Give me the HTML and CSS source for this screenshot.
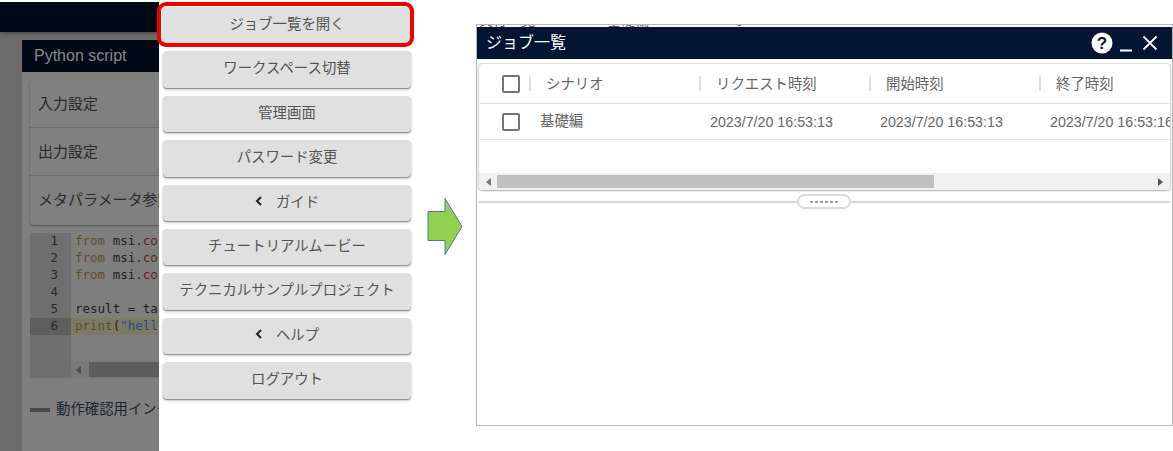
FILE: index.html
```html
<!DOCTYPE html>
<html lang="ja">
<head>
<meta charset="utf-8">
<title>ジョブ一覧</title>
<link rel="stylesheet" href="styles.css">
</head>
<body>
<main class="canvas">
  <section class="app-shot">
    <div class="app-topbar"></div>
    <div class="app-panel">
      <h2 class="panel-title">Python script</h2>
      <div class="accordion">
        <div class="acc-row">入力設定</div>
        <div class="acc-row">出力設定</div>
        <div class="acc-row">メタパラメータ参照設定</div>
      </div>
      <div class="editor">
        <div class="code-line"><span class="ln">1</span><span class="code"><span class="kw">from</span> msi.<span class="mod">core</span></span></div>
        <div class="code-line"><span class="ln">2</span><span class="code"><span class="kw">from</span> msi.<span class="mod">core</span></span></div>
        <div class="code-line"><span class="ln">3</span><span class="code"><span class="kw">from</span> msi.<span class="mod">core</span></span></div>
        <div class="code-line"><span class="ln">4</span><span class="code"></span></div>
        <div class="code-line"><span class="ln">5</span><span class="code">result = task</span></div>
        <div class="code-line active"><span class="ln">6</span><span class="code"><span class="kw">print</span>(<span class="str">"hello"</span>)</span></div>
        <div class="code-fill"><span class="ln"></span><span class="code"></span></div>
        <div class="code-scroll">
          <span class="ln"></span>
          <div class="code-track">
            <svg class="tri" width="6" height="8" viewBox="0 0 6 8"><path d="M5 0v8L0 4z" fill="#4a4a4a"/></svg>
            <div class="code-thumb"></div>
          </div>
        </div>
      </div>
      <div class="legend"><span class="legend-dash"></span><span class="legend-text">動作確認用インターフェース</span></div>
    </div>
  </section>

  <nav class="drawer">
    <button class="menu-btn">ジョブ一覧を開く</button>
    <button class="menu-btn">ワークスペース切替</button>
    <button class="menu-btn">管理画面</button>
    <button class="menu-btn">パスワード変更</button>
    <button class="menu-btn"><svg class="chev" width="8" height="10" viewBox="0 0 8 10"><path d="M6 1 2 5l4 4" fill="none" stroke="#222" stroke-width="2"/></svg>ガイド</button>
    <button class="menu-btn">チュートリアルムービー</button>
    <button class="menu-btn">テクニカルサンプルプロジェクト</button>
    <button class="menu-btn"><svg class="chev" width="8" height="10" viewBox="0 0 8 10"><path d="M6 1 2 5l4 4" fill="none" stroke="#222" stroke-width="2"/></svg>ヘルプ</button>
    <button class="menu-btn">ログアウト</button>
  </nav>
  <div class="highlight"></div>

  <svg class="arrow" width="36" height="60" viewBox="0 0 36 60"><path d="M1 14.500h17V1.500l17 28-17 28V43.500H1z" fill="#92d050" stroke="#4a78a8" stroke-width="1"/></svg>

  <section class="job-window">
    <div class="clip-strip"><span class="clip-a">実行一覧</span><span class="clip-b">基礎編</span><span class="clip-c">の</span></div>
    <header class="win-head">
      <h1 class="win-title">ジョブ一覧</h1>
      <div class="win-icons">
        <svg width="22" height="22" viewBox="0 0 22 22"><circle cx="11" cy="11" r="10.500" fill="#fff"/><text x="11" y="17" text-anchor="middle" class="help-mark">?</text></svg>
        <svg width="14" height="22" viewBox="0 0 14 22"><path d="M1 18.500h12" stroke="#fff" stroke-width="2"/></svg>
        <svg class="win-close" width="16" height="22" viewBox="0 0 16 22"><path d="M1.500 4.500l13 13M14.500 4.500l-13 13" stroke="#fff" stroke-width="1.800"/></svg>
      </div>
    </header>
    <div class="job-card">
      <div class="job-scroll">
        <div class="job-row job-row-head">
          <div class="cell-check cell-check-head"><span class="check"></span></div>
          <div class="cell-head">シナリオ</div>
          <div class="cell-head">リクエスト時刻</div>
          <div class="cell-head">開始時刻</div>
          <div class="cell-head">終了時刻</div>
        </div>
        <div class="job-row job-row-body">
          <div class="cell-check"><span class="check"></span></div>
          <div class="cell cell-name">基礎編</div>
          <div class="cell">2023/7/20 16:53:13</div>
          <div class="cell">2023/7/20 16:53:13</div>
          <div class="cell">2023/7/20 16:53:16</div>
        </div>
      </div>
      <div class="job-hscroll">
        <svg width="5" height="8" viewBox="0 0 5 8"><path d="M5 0v8L0 4z" fill="#777"/></svg>
        <div class="job-thumb"></div>
        <svg class="tri-right" width="5" height="8" viewBox="0 0 5 8"><path d="M0 0v8l5-4z" fill="#555"/></svg>
      </div>
    </div>
    <div class="splitter"><div class="split-handle"><span class="split-dots"></span></div></div>
  </section>
</main>
</body>
</html>
```
FILE: styles.css
```css
* { box-sizing: border-box; }
html, body { margin: 0; padding: 0; background: #fff; }
body {
  width: 1173px;
  height: 451px;
  overflow: hidden;
  font-family: "Liberation Sans", "Noto Sans CJK JP", sans-serif;
}
.canvas { position: relative; width: 1173px; height: 451px; background: #fff; }

/* dimmed application screenshot */
.app-shot {
  position: absolute;
  left: 0; top: 2px;
  width: 159px; height: 449px;
  background: #6c6c6c;
  overflow: hidden;
}
.app-topbar {
  height: 30px;
  background: #000a17;
  box-shadow: 0 1px 4px rgba(0,0,0,.4);
}
.app-panel {
  margin: 8px 0 0 22px;
  width: 160px;
  height: 420px;
  background: #7e7e7e;
}
.panel-title {
  margin: 0;
  height: 32px;
  padding-left: 12px;
  background: #000a17;
  color: #868686;
  font-size: 16px;
  font-weight: 400;
  line-height: 31px;
  white-space: nowrap;
}
.accordion {
  margin: 8px 0 0 8px;
  width: 200px;
  border-radius: 4px;
  background: #808080;
  box-shadow: 0 1px 2px rgba(0,0,0,.35);
}
.acc-row {
  height: 48px;
  padding-left: 8px;
  color: #2a2a2a;
  font-size: 15px;
  line-height: 47px;
  white-space: nowrap;
  border-bottom: 1px solid #6b6b6b;
}
.acc-row:last-child { border-bottom: 0; height: 49px; }
.editor {
  margin: 8px 0 0 8px;
  width: 200px;
  font-family: "DejaVu Sans Mono", "Liberation Mono", monospace;
  font-size: 12.5px;
  color: #222;
}
.code-line { display: flex; height: 17px; line-height: 16px; }
.ln {
  flex: 0 0 41px;
  padding-right: 13px;
  text-align: right;
  background: #6f6f6f;
  color: #2a2a2a;
}
.code { flex: 1; padding-left: 4px; white-space: pre; background: #7e7e7e; }
.kw { color: #5f4d30; }
.mod { color: #6b1a1a; }
.str { color: #234f80; }
.active .ln { background: #5e5e5e; }
.active .code { background: #7c7a64; }
.code-fill { display: flex; height: 26px; }
.code-scroll { display: flex; height: 17px; }
.code-track {
  flex: 1;
  display: flex;
  align-items: center;
  gap: 7px;
  padding-left: 5px;
  background: #787878;
}
.code-thumb { width: 120px; height: 15px; background: #5d5d5d; }
.legend { display: flex; align-items: center; gap: 6px; margin: 21px 0 0 8px; width: 200px; }
.legend-dash { flex: 0 0 20px; height: 4px; margin-top: 2px; background: #484848; }
.legend-text { color: #1c2430; font-size: 14.4px; white-space: nowrap; line-height: 20px; }

/* drawer */
.drawer {
  position: absolute;
  left: 159px; top: 0;
  width: 256px; height: 451px;
  padding: 7px 4px 0;
  background: #fff;
  display: flex;
  flex-direction: column;
  gap: 8px;
}
.menu-btn {
  flex: 0 0 36.4px;
  display: flex;
  align-items: center;
  justify-content: center;
  gap: 13px;
  margin: 0;
  padding: 0 0 4px;
  border: 0;
  border-radius: 4px;
  background: #e0e0e0;
  box-shadow: 0 1px 1px #8f8f8f, 0 2px 3px rgba(0,0,0,.18);
  color: #555;
  font-family: "Noto Sans CJK JP", "Liberation Sans", sans-serif;
  font-size: 14.4px;
  font-weight: 400;
  line-height: 1;
}
.chev { flex: none; }
.highlight {
  position: absolute;
  left: 157px; top: 2px;
  width: 257px; height: 45px;
  border: 4px solid #f00000;
  border-radius: 9px;
}

.arrow { position: absolute; left: 427px; top: 197px; }

/* job window */
.job-window {
  position: absolute;
  left: 476px; top: 24px;
  width: 697px; height: 402px;
  border: 1px solid #b8b8b8;
  background: #fff;
}
.clip-strip {
  display: flex;
  height: 2px;
  overflow: hidden;
  font-size: 14px;
  line-height: 14px;
  color: #555;
}
.clip-strip span { margin-top: -12px; white-space: nowrap; }
.clip-a { margin-left: 2px; }
.clip-b { margin-left: 72px; }
.clip-c { margin-left: 82px; }
.win-head {
  display: flex;
  align-items: center;
  justify-content: space-between;
  height: 32px;
  padding: 0 14px 0 9px;
  background: #021633;
}
.win-title {
  margin: 0;
  padding-bottom: 3px;
  color: #fff;
  font-family: "Noto Sans CJK JP", sans-serif;
  font-size: 16px;
  font-weight: 400;
  line-height: 29px;
}
.win-icons { display: flex; align-items: center; gap: 6px; }
.win-icons svg { display: block; }
.win-close { margin-left: 3px; }
.help-mark { fill: #021633; font-family: "Liberation Sans", sans-serif; font-size: 17px; font-weight: 700; }
.job-card {
  margin: 5px 2px 0 2px;
  height: 126px;
  border-radius: 3px;
  background: #fff;
  box-shadow: 0 0 2px rgba(0,0,0,.45), 0 1px 2px rgba(0,0,0,.2);
  overflow: hidden;
}
.job-scroll { height: 109px; overflow: hidden; }
.job-row { display: flex; width: 730px; margin-left: 1px; border-bottom: 1px solid #e0e0e0; }
.job-row-head { height: 40px; align-items: center; }
.job-row-body { height: 36px; align-items: center; }
.cell-check { flex: 0 0 50px; padding-left: 22px; display: flex; align-items: center; }
.cell-check-head { flex-basis: 49px; }
.check {
  display: block;
  width: 18px; height: 18px;
  border: 2px solid #757575;
  border-radius: 2px;
}
.cell-head {
  flex: 0 0 170px;
  height: 15px;
  padding-left: 15px;
  border-left: 2px solid #e0e0e0;
  color: #666;
  font-family: "Noto Sans CJK JP", sans-serif;
  font-size: 14.4px;
  line-height: 13px;
  white-space: nowrap;
}
.cell {
  flex: 0 0 170px;
  padding-left: 10px;
  color: #666;
  font-size: 14.25px;
  line-height: 20px;
  white-space: nowrap;
}
.cell-name { font-family: "Noto Sans CJK JP", sans-serif; font-size: 14.4px; padding-bottom: 3px; }
.job-hscroll {
  display: flex;
  align-items: center;
  height: 17px;
  padding: 0 7px;
  background: #f1f1f1;
}
.job-hscroll svg { flex: none; }
.job-thumb { width: 437px; height: 13px; margin-left: 6px; background: #c1c1c1; }
.tri-right { margin-left: auto; }
.splitter {
  position: relative;
  margin: 11px 2px 0;
  height: 2px;
  background: #d8d8d8;
}
.split-handle {
  position: absolute;
  left: 318px; top: -7px;
  width: 54px; height: 15px;
  display: flex;
  align-items: center;
  justify-content: center;
  border: 2px solid #dcdcdc;
  border-radius: 8px;
  background: #fff;
}
.split-dots {
  width: 29px;
  height: 2px;
  background: repeating-linear-gradient(90deg, #a0a0a0 0 3px, transparent 3px 5px);
}
```
